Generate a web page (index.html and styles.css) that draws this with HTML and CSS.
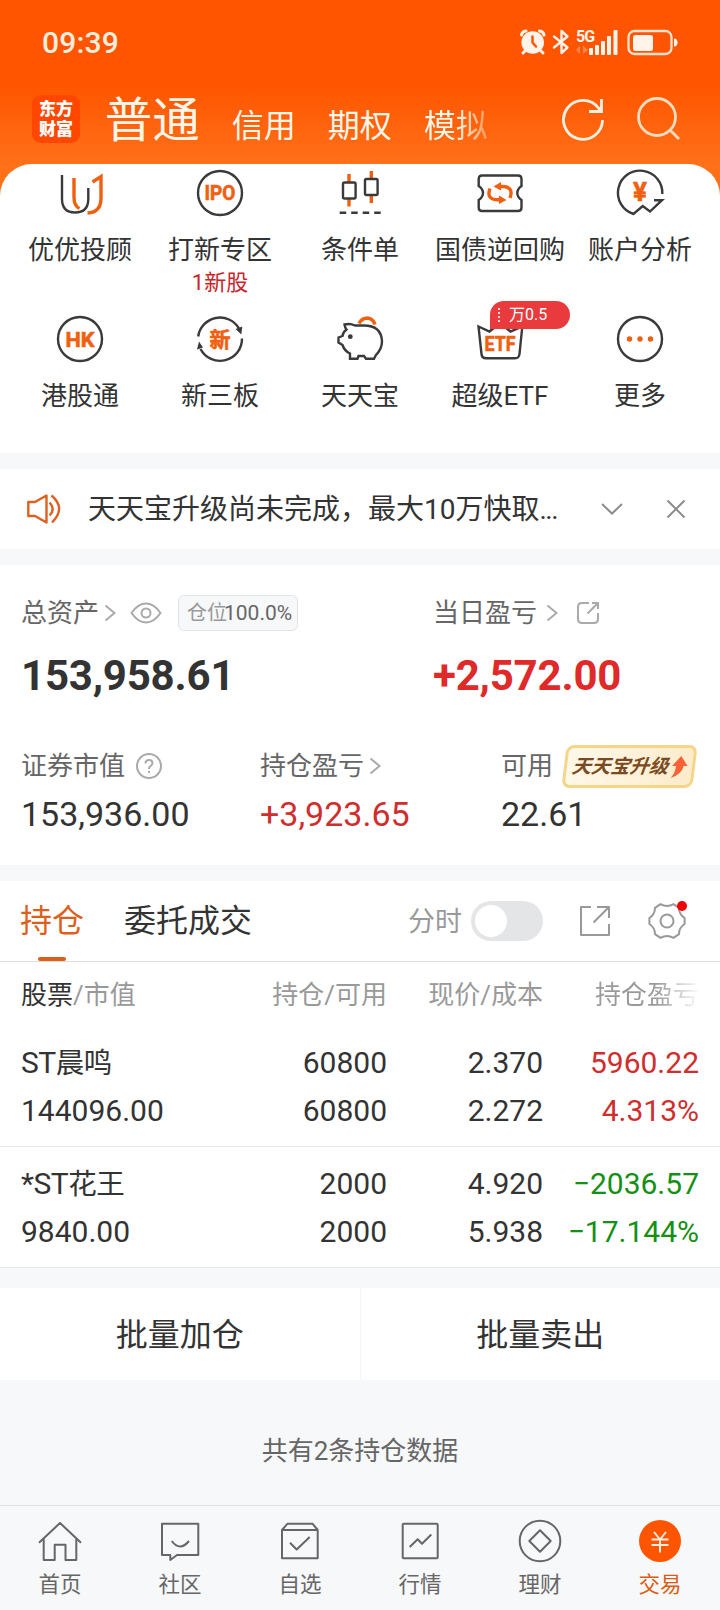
FILE: index.html
```html
<!DOCTYPE html>
<html lang="zh-CN">
<head>
    <meta charset="UTF-8">
    <meta name="viewport" content="width=device-width, initial-scale=1.0">
    <title>交易</title>
    <link rel="stylesheet" href="styles.css">
</head>
<body>
    <header>
        <div class="status">
            <span class="time">09:39</span>
            <svg class="status-icons" width="162" height="30" viewBox="0 0 162 30">
                <g fill="none" stroke="#fff3ea" stroke-width="3" stroke-linecap="round">
                    <path d="M2.500 8Q3 4.500 7 4M25 8Q24.500 4.500 20.500 4M6 24L4 26M22 24L24 26"/>
                </g>
                <circle cx="13.700" cy="15.500" r="11.300" fill="#fff3ea"/>
                <path d="M13.500 9.500V15.500L17 19.500" fill="none" stroke="#ff5500" stroke-width="2.500" stroke-linecap="round"/>
                <path d="M35 9.500L48.500 20.500L42.500 26V4L48.500 9.500L35 20.500" fill="none" stroke="#fff3ea" stroke-width="2.400" stroke-linejoin="round" stroke-linecap="round"/>
                <text x="57" y="14.500" class="net">5G</text>
                <path d="M57 23L61 18.500V27zM69 23L64 18.500V27z" fill="#ff8548"/>
                <g fill="#fff3ea">
                    <rect x="70" y="21" width="4" height="7" rx="1"/>
                    <rect x="76" y="18" width="4" height="10" rx="1"/>
                    <rect x="82" y="14" width="4" height="14" rx="1"/>
                    <rect x="88" y="9" width="4" height="19" rx="1"/>
                    <rect x="94.500" y="3" width="4" height="25" rx="1"/>
                    <rect x="114" y="8" width="20" height="16" rx="2.500"/>
                    <path d="M155 11.500Q158.500 11.500 158.500 15.500Q158.500 19.500 155 19.500z"/>
                </g>
                <rect x="109.500" y="4" width="43" height="23" rx="6" fill="none" stroke="#ffe3d0" stroke-width="2.300"/>
            </svg>
        </div>
        <div class="topbar">
            <div class="logo">东方<br>财富</div>
            <nav class="types">
                <span class="current">普通</span>
                <span>信用</span>
                <span>期权</span>
                <span class="fade">模拟</span>
            </nav>
            <svg class="refresh" width="44" height="44" viewBox="0 0 44 44" fill="none" stroke="#fff0e2" stroke-width="2.800">
                <path d="M41.500 23A19.500 19.500 0 1 1 37.500 11L40.500 14.500"/>
                <path d="M40.500 2V14.500H28"/>
            </svg>
            <svg width="44" height="44" viewBox="0 0 44 44" fill="none" stroke="#ffdcc0" stroke-width="2.800">
                <circle cx="20" cy="20" r="18.500"/>
                <path d="M33 33L42 42"/>
            </svg>
        </div>
    </header>

    <section class="menu">
        <div class="item">
            <svg width="56" height="56" viewBox="0 0 56 56">
                <path class="dk" d="M10 10V34Q10 47.500 23 47.500Q36.300 47.500 36.300 34V23"/>
                <path class="or" d="M22 13V32Q22 41 27.500 43.500M40.500 17L49 11.500V33Q49 47.500 35.500 48"/>
            </svg>
            <p>优优投顾</p>
        </div>
        <div class="item">
            <svg width="56" height="56" viewBox="0 0 56 56">
                <circle class="dk" cx="28" cy="28" r="22"/>
                <text x="28" y="35.200" class="icon-text" textLength="31" lengthAdjust="spacingAndGlyphs">IPO</text>
            </svg>
            <p>打新专区</p>
            <small>1新股</small>
        </div>
        <div class="item">
            <svg width="56" height="56" viewBox="0 0 56 56">
                <path class="or" d="M17 9V17M17 34V41.500M39.300 6V13M39.300 31V38"/>
                <rect class="dk" x="11" y="17.500" width="12.600" height="16" rx="1.500"/>
                <rect class="dk" x="33" y="14" width="12.600" height="16" rx="1.500"/>
                <path class="dk" d="M7.700 47.700H49" stroke-dasharray="6.500 5"/>
            </svg>
            <p>条件单</p>
        </div>
        <div class="item">
            <svg width="56" height="56" viewBox="0 0 56 56">
                <path class="dk" d="M10 10.500H46Q49.500 10.500 49.500 14V21Q45.300 24 45.300 28Q45.300 32 49.500 35V42.500Q49.500 46 46 46H10Q6.700 46 6.700 42.500V35Q11 32 11 28Q11 24 6.700 21V14Q6.700 10.500 10 10.500z"/>
                <path class="or" d="M38 33Q42 22 31 21.500H27M18 23.500Q14 34 25 34.800H29"/>
                <path d="M21.500 21.500L29 17V25.500zM34.500 35L27 30.500V39z" fill="#f0600f"/>
            </svg>
            <p>国债逆回购</p>
        </div>
        <div class="item">
            <svg width="56" height="56" viewBox="0 0 56 56">
                <path class="dk" d="M50.300 29A22.200 22.200 0 1 0 21.500 49L30.700 41L38 46.500L50 35.200H42"/>
                <text x="28" y="35.500" class="icon-text yen">¥</text>
            </svg>
            <p>账户分析</p>
        </div>
        <div class="item">
            <svg width="56" height="56" viewBox="0 0 56 56">
                <circle class="dk" cx="28" cy="28" r="22"/>
                <text x="28" y="35.500" class="icon-text" textLength="29" lengthAdjust="spacingAndGlyphs">HK</text>
            </svg>
            <p>港股通</p>
        </div>
        <div class="item">
            <svg width="56" height="56" viewBox="0 0 56 56">
                <path class="dk" d="M6.200 25.500A22 22 0 0 1 47 17.500M50 27.500A22 22 0 0 1 8.500 38"/>
                <path d="M43.500 18L50.300 15.500L49.300 23.500zM7 30.500L5 38.500L11 36.500z" fill="#3a3a3a"/>
                <text x="28" y="35.500" class="icon-text">新</text>
            </svg>
            <p>新三板</p>
        </div>
        <div class="item">
            <svg width="56" height="56" viewBox="0 0 56 56">
                <path class="or" d="M27 12.500Q30 7 35.500 7Q41 7.500 43 13.500"/>
                <path class="dk" d="M23 14.500Q18 12 12.500 13.500Q13 17 14.500 18.500Q11 21 10.500 25L6.500 26.500V31.500L10.500 34Q12.500 40 18 42.500V47.700H25.500L26.500 45H32L34 47.700H42L44 44Q50 38 50 30Q49 14.500 32 14.500z"/>
                <circle cx="18.300" cy="25.700" r="2.400" fill="#3a3a3a"/>
            </svg>
            <p>天天宝</p>
        </div>
        <div class="item">
            <svg width="56" height="56" viewBox="0 0 56 56">
                <path class="dk" d="M6.500 15.500L17.500 20.500L28 12L38.500 20.500L50.300 15.500L47.500 43Q47 47.300 43 47.300H14Q10 47.300 9.500 43z"/>
                <text x="28" y="39.500" class="icon-text" textLength="31" lengthAdjust="spacingAndGlyphs">ETF</text>
            </svg>
            <div class="tag"><i></i>万0.5</div>
            <p>超级ETF</p>
        </div>
        <div class="item">
            <svg width="56" height="56" viewBox="0 0 56 56">
                <circle class="dk" cx="28" cy="28" r="22"/>
                <g fill="#f0600f">
                    <circle cx="17.500" cy="28" r="2.700"/>
                    <circle cx="28" cy="28" r="2.700"/>
                    <circle cx="38.500" cy="28" r="2.700"/>
                </g>
            </svg>
            <p>更多</p>
        </div>
    </section>

    <section class="notice">
        <svg width="36" height="34" viewBox="0 0 36 34" fill="none" stroke="#dd6122" stroke-width="2.400">
            <path d="M2.300 10H9L20.500 3.500V30.500L9 24H2.300z" stroke-linejoin="round"/>
            <path d="M23.500 10.500Q30 17 23.500 23.500M25.500 3.500Q40.500 16 26 30.500"/>
        </svg>
        <p>天天宝升级尚未完成，最大10万快取<span>...</span></p>
        <svg class="down" width="22" height="14" viewBox="0 0 22 14" fill="none" stroke="#8c8c8c" stroke-width="2"><path d="M1 2L11 11.500L21 2"/></svg>
        <svg width="20" height="20" viewBox="0 0 20 20" fill="none" stroke="#8c8c8c" stroke-width="2"><path d="M1.500 1.500L18.500 18.500M18.500 1.500L1.500 18.500"/></svg>
    </section>

    <section class="assets">
        <div class="total">
            <div class="label"><p>总资产</p>
                <svg class="arrow" width="12" height="18" viewBox="0 0 12 18"><path d="M1.500 1.500L10.500 9L1.500 16.500"/></svg>
                <svg class="eye" width="32" height="22" viewBox="0 0 32 22">
                    <path d="M1.500 11Q8 1.500 16 1.500Q24 1.500 30.500 11Q24 20.500 16 20.500Q8 20.500 1.500 11z"/>
                    <circle cx="16" cy="11" r="4.500"/>
                </svg>
                <span class="ratio">仓位<b>100.0%</b></span>
            </div>
            <div class="big">153,958.61</div>
        </div>
        <div class="today">
            <div class="label"><p>当日盈亏</p>
                <svg class="arrow" width="12" height="18" viewBox="0 0 12 18"><path d="M1.500 1.500L10.500 9L1.500 16.500"/></svg>
                <svg class="share" width="24" height="24" viewBox="0 0 24 24">
                    <path d="M13 2H6Q2 2 2 6V18Q2 22 6 22H18Q22 22 22 18V12M16 2H22V8M22 2L11.500 12.500"/>
                </svg>
            </div>
            <div class="big red">+2,572.00</div>
        </div>
        <div class="cell">
            <div class="label"><p>证券市值</p>
                <svg class="help" width="28" height="28" viewBox="0 0 28 28">
                    <circle cx="14" cy="14" r="12"/>
                    <path d="M10.500 11.500Q10.500 8 14 8Q17.500 8 17.500 11Q17.500 12.800 15.500 14Q14 15 14 17M14 19V21"/>
                </svg>
            </div>
            <div class="num">153,936.00</div>
        </div>
        <div class="cell">
            <div class="label"><p>持仓盈亏</p>
                <svg class="arrow" width="12" height="18" viewBox="0 0 12 18"><path d="M1.500 1.500L10.500 9L1.500 16.500"/></svg>
            </div>
            <div class="num red2">+3,923.65</div>
        </div>
        <div class="cell">
            <div class="label"><p>可用</p>
                <span class="upgrade"><em>天天宝升级</em>
                    <svg width="18" height="24" viewBox="0 0 18 24"><path d="M10 1L17.500 11H13.500Q13 19 2 23Q6 18 6 11H2z" fill="#fb6136"/></svg>
                </span>
            </div>
            <div class="num">22.61</div>
        </div>
    </section>

    <section class="holding">
        <div class="tabs">
            <span class="tab active">持仓</span>
            <span class="tab">委托成交</span>
            <span class="minute">分时</span>
            <span class="switch"></span>
            <svg class="open" width="32" height="32" viewBox="0 0 32 32">
                <path d="M12 2H2V30H30V19M18 2H30V13M30 2L14.500 17.500"/>
            </svg>
            <div class="gear">
                <svg width="38" height="38" viewBox="0 0 38 38">
                    <path d="M12.500 2.200Q19 6 25.500 2.200L31 5.800Q31 12.500 36.600 16V22Q31 25.500 31 32.200L25.500 35.800Q19 32 12.500 35.800L7 32.200Q7 25.500 1.400 22V16Q7 12.500 7 5.800z"/>
                    <circle cx="19" cy="19" r="6.500"/>
                </svg>
                <i></i>
            </div>
        </div>
        <div class="row head">
            <span><b>股票</b>/市值</span><span>持仓/可用</span><span>现价/成本</span><span class="fade">持仓盈亏</span>
        </div>
        <div class="row">
            <span class="name">ST<b>晨鸣</b></span><span>60800</span><span>2.370</span><span class="red2">5960.22</span>
            <span>144096.00</span><span>60800</span><span>2.272</span><span class="red2">4.313%</span>
        </div>
        <div class="row">
            <span class="name">*ST<b>花王</b></span><span>2000</span><span>4.920</span><span class="green">−2036.57</span>
            <span>9840.00</span><span>2000</span><span>5.938</span><span class="green">−17.144%</span>
        </div>
    </section>

    <section class="batch">
        <div>批量加仓</div>
        <div>批量卖出</div>
    </section>

    <p class="count">共有2条持仓数据</p>

    <footer>
        <a>
            <svg width="48" height="48" viewBox="0 0 48 48"><path d="M3 25.700L24 6L45 25.700M7.700 22V43H18.700V27.700H29.500V43H40.300V22"/></svg>
            首页
        </a>
        <a>
            <svg width="48" height="48" viewBox="0 0 48 48"><path d="M6 6.700H42.300V38H21L14.300 43V38H6zM15.700 24Q24 35 33 24"/></svg>
            社区
        </a>
        <a>
            <svg width="48" height="48" viewBox="0 0 48 48"><path d="M6 13L11.500 6.700H36.500L41.700 13V41.300H6zM6 13H41.700M14 25.700L20.700 32.500L33.700 20"/></svg>
            自选
        </a>
        <a>
            <svg width="48" height="48" viewBox="0 0 48 48"><rect x="6.700" y="6.700" width="35" height="34.600" rx="1"/><path d="M13.700 30L21.700 22.300L26 26.700L35.300 17.500"/></svg>
            行情
        </a>
        <a>
            <svg width="48" height="48" viewBox="0 0 48 48"><circle cx="24" cy="24" r="20.300"/><path d="M24 13.300L34.700 24L24 34.700L13.300 24z"/></svg>
            理财
        </a>
        <a class="on">
            <svg width="48" height="48" viewBox="0 0 48 48"><circle cx="24" cy="24" r="21"/><path d="M18 15L24 22.500L30 15M15.500 22.500H32.500M15.500 28H32.500M24 22.500V35.500"/></svg>
            交易
        </a>
    </footer>
</body>
</html>
```
FILE: styles.css
```css
*{
    box-sizing: border-box;
}
body{
    margin: 0;
    width: 720px;
    background-color: #f7f8fa;
    font-family: Roboto, "Noto Sans CJK SC", sans-serif;
    color: #333;
}
p{
    margin: 0;
}
svg{
    display: block;
    flex: none;
}

/* header */
header{
    height: 200px;
    background: linear-gradient(#ff5500 84px, #ff7019 164px);
    color: #fff6ea;
}
.status{
    display: flex;
    justify-content: space-between;
    align-items: center;
    height: 84px;
    padding: 0 39px 0 42px;
}
.time{
    font-size: 30px;
    font-weight: 500;
    letter-spacing: 0.2px;
    color: #ffeedd;
}
.status-icons{
    margin-top: -1px;
}
.net{
    font-size: 16px;
    font-weight: bold;
    letter-spacing: -1px;
    fill: #fff3ea;
}
.topbar{
    display: flex;
    align-items: center;
    height: 70px;
    padding: 0 39px 0 32px;
}
.logo{
    width: 48px;
    height: 48px;
    padding-top: 4px;
    border-radius: 9px;
    background-color: #ff4700;
    font-size: 17px;
    font-weight: 900;
    line-height: 20px;
    text-align: center;
    color: #fff;
}
.types{
    display: flex;
    align-items: baseline;
    width: 462px;
    padding-top: 8px;
    padding-left: 25px;
    font-size: 32px;
    line-height: 70px;
}
.types span{
    margin-right: 32px;
}
.types .current{
    font-size: 47.5px;
    margin-right: 32px;
}
.types .fade{
    background: linear-gradient(90deg, #fff6ea 50%, #ff9a58);
    -webkit-background-clip: text;
    color: transparent;
}
.refresh{
    margin-left: 21px;
    margin-right: 32px;
}

/* shortcuts */
.menu{
    display: grid;
    grid-template-columns: repeat(5, 140px);
    grid-auto-rows: 146px;
    height: 289px;
    margin-top: -36px;
    padding: 1px 10px 0;
    border-radius: 32px 32px 0 0;
    background-color: #fff;
}
.item{
    position: relative;
    display: flex;
    flex-direction: column;
    align-items: center;
}
.item p{
    margin-top: 11px;
    font-size: 26px;
    line-height: 36px;
    white-space: nowrap;
}
.item small{
    margin-top: 1px;
    font-size: 22px;
    line-height: 28px;
    color: #c9252b;
}
.dk{
    fill: none;
    stroke: #3a3a3a;
    stroke-width: 2.4;
}
.or{
    fill: none;
    stroke: #f0600f;
    stroke-width: 3.4;
}
.icon-text{
    font-size: 21px;
    font-weight: bold;
    text-anchor: middle;
    fill: #f0600f;
    stroke: #f0600f;
    stroke-width: 0.6;
}
.yen{
    font-size: 26px;
}
.tag{
    position: absolute;
    left: 60px;
    top: -10px;
    display: flex;
    align-items: center;
    width: 80px;
    height: 28px;
    padding-left: 8px;
    border-radius: 14px 14px 14px 0;
    background-color: #e93b3d;
    font-size: 16px;
    line-height: 26px;
    color: #fff;
}
.tag i{
    height: 14px;
    margin-right: 9px;
    border-left: 2px dotted #ffd5d5;
}

/* notice */
.notice{
    display: flex;
    align-items: center;
    height: 80px;
    margin-top: 16px;
    padding: 0 34px 0 26px;
    background-color: #fff;
}
.notice p{
    flex: 1;
    padding-top: 2px;
    padding-left: 26px;
    font-size: 28px;
    line-height: 40px;
    white-space: nowrap;
}
.notice p span{
    letter-spacing: -1.5px;
}
.down{
    margin-right: 43px;
}

/* assets */
.assets{
    display: grid;
    grid-template-columns: 239px 173px 68px 1fr;
    grid-template-rows: 153px 1fr;
    height: 300px;
    margin-top: 16px;
    padding: 28px 0 0 21px;
    background-color: #fff;
}
.total{
    grid-column: 1 / 3;
}
.today{
    grid-column: 3 / 5;
}
.cell:last-child{
    grid-column: 4;
}
.label{
    display: flex;
    align-items: center;
    height: 40px;
    font-size: 26px;
    color: #666;
    white-space: nowrap;
}
.label p{
    line-height: 36px;
}
.label svg{
    fill: none;
    stroke: #aaa;
    stroke-width: 2;
}
.label .arrow{
    margin-left: 5px;
}
.today .arrow{
    margin-left: 9px;
}
.label .eye{
    margin-left: 14px;
}
.label .share{
    margin-left: 18px;
}
.label .help{
    margin-left: 10px;
}
.ratio{
    display: flex;
    align-items: center;
    width: 120px;
    height: 36px;
    margin-left: 16px;
    padding-left: 8px;
    border: 1px solid #e3e4e6;
    border-radius: 6px;
    background-color: #f7f8fa;
    font-size: 20px;
    line-height: 32px;
    color: #999;
}
.ratio b{
    margin-left: -3px;
    font-size: 21px;
    font-weight: normal;
    color: #666;
}
.big{
    margin-top: 19px;
    font-size: 42px;
    font-weight: bold;
    line-height: 48px;
    letter-spacing: -0.2px;
}
.num{
    margin-top: 7px;
    font-size: 34px;
    line-height: 42px;
}
.red{
    color: #e02a2a;
}
.red2{
    color: #cf2e2e;
}
.green{
    color: #149014;
}
.upgrade{
    display: flex;
    align-items: center;
    width: 131px;
    height: 43px;
    margin-left: 11px;
    padding-left: 5px;
    border: 3px solid #f5d587;
    border-radius: 8px;
    background: linear-gradient(90deg, #fff8e8, #fdeccb);
    line-height: 30px;
    transform: skewX(-7deg);
}
.upgrade em{
    font-size: 19.3px;
    font-weight: bold;
    color: #7a4a22;
}
.upgrade svg{
    margin-left: 2px;
    stroke: none;
}

/* holdings */
.holding{
    margin-top: 16px;
    background-color: #fff;
}
.tabs{
    display: flex;
    align-items: center;
    height: 81px;
    padding-left: 20px;
    border-bottom: 1px solid #ddd;
}
.tab{
    margin-right: 40px;
    font-size: 32px;
    line-height: 82px;
}
.active{
    position: relative;
    color: #dd5f1c;
}
.active::after{
    content: "";
    position: absolute;
    left: 18px;
    bottom: 1px;
    width: 28px;
    height: 4px;
    border-radius: 2px;
    background-color: #dd5f1c;
}
.minute{
    margin-top: 2px;
    margin-left: 116px;
    font-size: 27px;
    line-height: 38px;
    color: #999;
}
.switch{
    width: 72px;
    height: 40px;
    margin-left: 9px;
    padding: 4px;
    border-radius: 20px;
    background-color: #e4e5e7;
}
.switch::before{
    content: "";
    display: block;
    width: 32px;
    height: 32px;
    border-radius: 50%;
    background-color: #fff;
}
.open, .gear svg{
    fill: none;
    stroke: #999;
    stroke-width: 2;
    stroke-linejoin: round;
}
.open{
    margin-left: 36px;
}
.gear{
    position: relative;
    margin-left: 37px;
}
.gear i{
    position: absolute;
    right: -1px;
    top: -1px;
    width: 10px;
    height: 10px;
    border-radius: 50%;
    background-color: #f00000;
}
.row{
    display: grid;
    grid-template-columns: 200px 166px 156px 156px;
    padding: 13px 21px 11px;
    border-bottom: 1px solid #e9e9e9;
    font-size: 30px;
    line-height: 48px;
    text-align: right;
}
.row span:nth-child(4n+1){
    text-align: left;
}
.row b{
    font-weight: normal;
}
.name{
    letter-spacing: -0.5px;
}
.name b{
    font-size: 28.5px;
    line-height: 1;
}
.head{
    height: 64px;
    padding: 0 21px;
    border: none;
    font-size: 26px;
    line-height: 66px;
    color: #999;
}
.head b{
    color: #333;
}
.head .fade{
    background: linear-gradient(90deg, #999 72%, #f4f4f4 98%);
    -webkit-background-clip: text;
    color: transparent;
}

/* batch buttons */
.batch{
    display: flex;
    height: 92px;
    margin-top: 20px;
    background-color: #fff;
    font-size: 32px;
    line-height: 94px;
    text-align: center;
}
.batch div{
    flex: 1;
}
.batch div + div{
    border-left: 1px solid #f5f5f5;
}
.count{
    height: 125px;
    font-size: 26px;
    line-height: 142px;
    text-align: center;
    color: #666;
}

/* bottom nav */
footer{
    display: flex;
    height: 105px;
    padding-top: 11px;
    border-top: 1px solid #dde0e2;
}
footer a{
    display: flex;
    flex-direction: column;
    align-items: center;
    width: 120px;
    font-size: 21.5px;
    line-height: 40px;
    color: #666;
}
footer svg{
    fill: none;
    stroke: #666;
    stroke-width: 2;
    stroke-linejoin: round;
}
footer .on{
    color: #dc5a12;
}
.on circle{
    fill: #ff5500;
    stroke: none;
}
.on path{
    stroke: #ffeede;
}
```
